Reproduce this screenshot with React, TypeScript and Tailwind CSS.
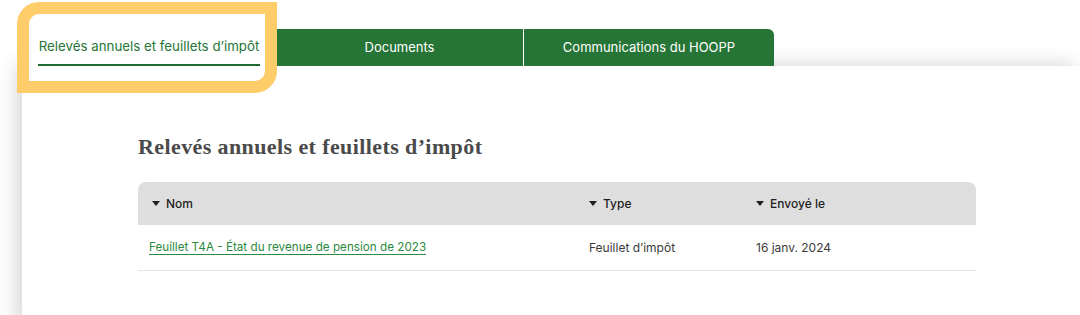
import { useState } from "react";

const TABS = ["Relevés annuels et feuillets d’impôt", "Documents", "Communications du HOOPP"];

function Caret() {
  return (
    <svg width="8" height="5" viewBox="0 0 8 5" className="shrink-0">
      <path d="M0 0 H8 L4 5 Z" fill="#1f1f1f" />
    </svg>
  );
}

export default function App() {
  const [active, setActive] = useState(0);

  return (
    <div className="relative w-[1080px] h-[315px] overflow-hidden bg-white font-['Inter',sans-serif]">
      {/* onglets */}
      <div className="relative z-10 flex pt-[29px] pl-[22px]">
        {TABS.map((tab, i) => (
          <button
            key={tab}
            onClick={() => setActive(i)}
            className={
              i === active
                ? "w-[254px] h-[37px] bg-white text-[13.3px] text-[#267536] flex flex-col items-center justify-end"
                : "h-[37px] bg-[#267536] text-white text-[13px] flex items-center justify-center border-l border-white first:border-l-0 " +
                  (i === 1 ? "w-[247px] border-l-0" : "w-[251px] rounded-tr-[6px]")
            }
          >
            {i === active ? (
              <span className="border-b-2 border-[#1d6b30] px-[1px] leading-[17px] pt-[3px]">
                <span className="block pb-[9px]">{tab}</span>
              </span>
            ) : (
              tab
            )}
          </button>
        ))}
      </div>

      {/* panneau */}
      <div className="ml-[22px] h-[260px] bg-white shadow-[-6px_-2px_18px_rgba(0,0,0,0.16)] pl-[116px] pt-[67px] pr-[82px]">
        <h2 className="font-['Liberation_Serif',serif] font-bold text-[22px] tracking-[0.4px] leading-[28px] text-[#4a4a4a]">
          Relevés annuels et feuillets d’impôt
        </h2>
        <div className="mt-[21px] w-[838px]">
          <div className="flex h-[43px] items-center bg-[#dedede] rounded-t-[8px] text-[12px] font-medium text-[#1f1f1f]">
            <div className="w-[451px] pl-[14px] flex items-center gap-[6px]">
              <Caret />
              Nom
            </div>
            <div className="w-[167px] flex items-center gap-[6px]">
              <Caret />
              Type
            </div>
            <div className="flex items-center gap-[6px]">
              <Caret />
              Envoyé le
            </div>
          </div>
          <div className="flex h-[46px] items-center border-b border-[#e6e6e6] text-[12px] text-[#3a3a3a]">
            <div className="w-[451px] pl-[11px]">
              <a href="#" className="text-[11.7px] text-[#2c8a3e] underline underline-offset-[3px] decoration-[#2c8a3e]">
                Feuillet T4A - État du revenue de pension de 2023
              </a>
            </div>
            <div className="w-[167px]">Feuillet d’impôt</div>
            <div>16 janv. 2024</div>
          </div>
        </div>
      </div>

      {/* surlignage jaune */}
      <div className="absolute left-[17px] top-[2px] w-[260px] h-[91px] border-[12px] border-[#fecd6a] rounded-tl-[22px] rounded-br-[22px] pointer-events-none z-20" />
    </div>
  );
}
